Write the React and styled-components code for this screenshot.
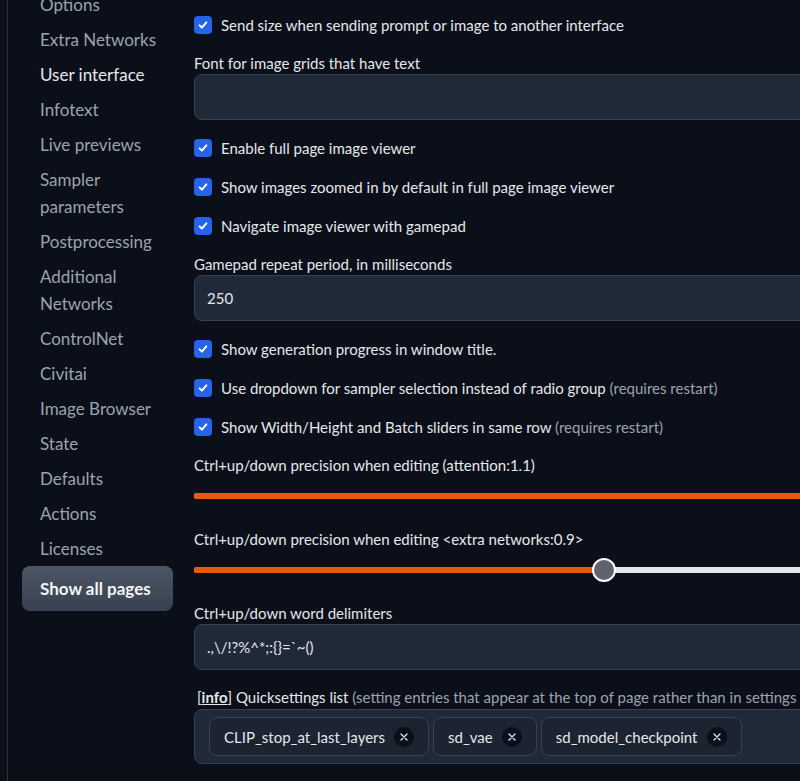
import React from 'react';
import styled, { createGlobalStyle } from 'styled-components';

const GlobalStyle = createGlobalStyle`
  html, body {
    margin: 0;
    padding: 0;
    background: #0b0f19;
    overflow: hidden;
  }
  body {
    font-family: Lato, "Noto Sans", sans-serif;
    color: #e5e7eb;
  }
`;

const Page = styled.div`
  display: flex;
  width: 800px;
  height: 781px;
  overflow: hidden;
  padding-left: 7px;
  box-sizing: border-box;
`;

const Sidebar = styled.nav`
  flex-shrink: 0;
  width: 151px;
  padding-left: 14px;
  margin-top: -13px;
  border-left: 1px solid #2b313d;
  display: flex;
  flex-direction: column;
`;

const NavItem = styled.div`
  width: 151px;
  box-sizing: border-box;
  padding: 4px 8px 4px 18px;
  font-size: 17px;
  line-height: 27px;
  color: ${p => (p.active ? '#e5e7eb' : '#9ca3af')};
`;

const ShowAllButton = styled.div`
  width: 151px;
  height: 45px;
  box-sizing: border-box;
  padding: 0 18px;
  display: flex;
  align-items: center;
  border-radius: 8px;
  background: linear-gradient(to bottom, #4b5563, #374151);
  color: #f3f4f6;
  font-size: 17px;
  font-weight: 700;
`;

const Main = styled.main`
  flex-shrink: 0;
  width: 700px;
  margin-left: 21px;
  padding-top: 14px;
  display: flex;
  flex-direction: column;
  gap: 17px;
`;

const CheckRow = styled.label`
  display: flex;
  align-items: center;
  gap: 9px;
  height: 22px;
  font-size: 15px;
  color: #e5e7eb;
`;

const Box = styled.span`
  width: 18px;
  height: 18px;
  flex-shrink: 0;
  border-radius: 4px;
  background: #2563eb;
  display: flex;
  align-items: center;
  justify-content: center;
`;

const Muted = styled.span`
  color: #9ca3af;
`;

const Field = styled.div`
  display: flex;
  flex-direction: column;
`;

const FieldLabel = styled.div`
  height: 20px;
  line-height: 20px;
  font-size: 15px;
  color: #e5e7eb;
  white-space: nowrap;
  padding-left: ${p => (p.indent ? '3px' : '0')};
`;

const TextInput = styled.div`
  height: 46px;
  margin-top: 1px;
  box-sizing: border-box;
  border: 1px solid #374151;
  border-radius: 8px;
  background: #1f2937;
  padding: 0 12px;
  display: flex;
  align-items: center;
  font-size: 15px;
  color: #e5e7eb;
`;

const SliderWrap = styled.div`
  height: 37px;
  padding-top: 4px;
  box-sizing: border-box;
  display: flex;
  align-items: center;
`;

const Track = styled.div`
  position: relative;
  width: 100%;
  height: 6px;
  border-radius: 3px;
  background: #e5e7eb;
`;

const Fill = styled.div`
  height: 100%;
  border-radius: 3px;
  background: #ea580c;
`;

const Thumb = styled.div`
  position: absolute;
  top: 50%;
  width: 20px;
  height: 20px;
  margin: -12px 0 0 -12px;
  border-radius: 50%;
  border: 2px solid #f9fafb;
  background: #60626f;
`;

const InfoLink = styled.span`
  font-weight: 700;
  text-decoration: underline;
`;

const ChipBox = styled.div`
  height: 55px;
  margin-top: 2px;
  box-sizing: border-box;
  border: 1px solid #374151;
  border-radius: 8px;
  background: #1f2937;
  padding: 7px 14px;
  display: flex;
  gap: 4px;
`;

const Chip = styled.div`
  height: 39px;
  box-sizing: border-box;
  border: 1px solid #374151;
  border-radius: 8px;
  background: #1c2331;
  padding: 0 14px;
  display: flex;
  align-items: center;
  gap: 9px;
  font-size: 15px;
  color: #e5e7eb;
`;

const ChipClose = styled.span`
  width: 20px;
  height: 20px;
  border-radius: 50%;
  background: #0b0f19;
  display: flex;
  align-items: center;
  justify-content: center;
`;

const Check = () => (
  <Box>
    <svg width="12" height="12" viewBox="0 0 16 16" fill="none">
      <path d="M3.5 8.5l3 3 6-7" stroke="#fff" strokeWidth="2.6" strokeLinecap="round" strokeLinejoin="round" />
    </svg>
  </Box>
);

const CheckSetting = ({ children, note }) => (
  <CheckRow>
    <Check />
    <span>
      {children}
      {note && <Muted> {note}</Muted>}
    </span>
  </CheckRow>
);

const Slider = ({ value }) => (
  <SliderWrap>
    <Track>
      <Fill style={{ width: `${value}%` }} />
      {value < 100 && <Thumb style={{ left: `${value}%` }} />}
    </Track>
  </SliderWrap>
);

const navItems = [
  'Options',
  'Extra Networks',
  'User interface',
  'Infotext',
  'Live previews',
  'Sampler parameters',
  'Postprocessing',
  'Additional Networks',
  'ControlNet',
  'Civitai',
  'Image Browser',
  'State',
  'Defaults',
  'Actions',
  'Licenses',
];

const quicksettings = ['CLIP_stop_at_last_layers', 'sd_vae', 'sd_model_checkpoint'];

export default function App() {
  return (
    <>
      <GlobalStyle />
      <Page>
        <Sidebar>
          {navItems.map(item => (
            <NavItem key={item} active={item === 'User interface'}>
              {item}
            </NavItem>
          ))}
          <ShowAllButton>Show all pages</ShowAllButton>
        </Sidebar>

        <Main>
          <CheckSetting>Send size when sending prompt or image to another interface</CheckSetting>

          <Field>
            <FieldLabel>Font for image grids that have text</FieldLabel>
            <TextInput />
          </Field>

          <CheckSetting>Enable full page image viewer</CheckSetting>
          <CheckSetting>Show images zoomed in by default in full page image viewer</CheckSetting>
          <CheckSetting>Navigate image viewer with gamepad</CheckSetting>

          <Field>
            <FieldLabel>Gamepad repeat period, in milliseconds</FieldLabel>
            <TextInput>250</TextInput>
          </Field>

          <CheckSetting>Show generation progress in window title.</CheckSetting>
          <CheckSetting note="(requires restart)">Use dropdown for sampler selection instead of radio group</CheckSetting>
          <CheckSetting note="(requires restart)">Show Width/Height and Batch sliders in same row</CheckSetting>

          <Field>
            <FieldLabel>Ctrl+up/down precision when editing (attention:1.1)</FieldLabel>
            <Slider value={100} />
          </Field>

          <Field>
            <FieldLabel>Ctrl+up/down precision when editing &lt;extra networks:0.9&gt;</FieldLabel>
            <Slider value={58.6} />
          </Field>

          <Field>
            <FieldLabel>Ctrl+up/down word delimiters</FieldLabel>
            <TextInput>{'.,\\/!?%^*;:{}=`~()'}</TextInput>
          </Field>

          <Field>
            <FieldLabel indent>
              [<InfoLink>info</InfoLink>] Quicksettings list{' '}
              <Muted>(setting entries that appear at the top of page rather than in settings tab)</Muted>
            </FieldLabel>
            <ChipBox>
              {quicksettings.map(name => (
                <Chip key={name}>
                  {name}
                  <ChipClose>
                    <svg width="8" height="8" viewBox="0 0 8 8">
                      <path d="M1 1l6 6M7 1L1 7" stroke="#e5e7eb" strokeWidth="1.3" strokeLinecap="round" />
                    </svg>
                  </ChipClose>
                </Chip>
              ))}
            </ChipBox>
          </Field>
        </Main>
      </Page>
    </>
  );
}
